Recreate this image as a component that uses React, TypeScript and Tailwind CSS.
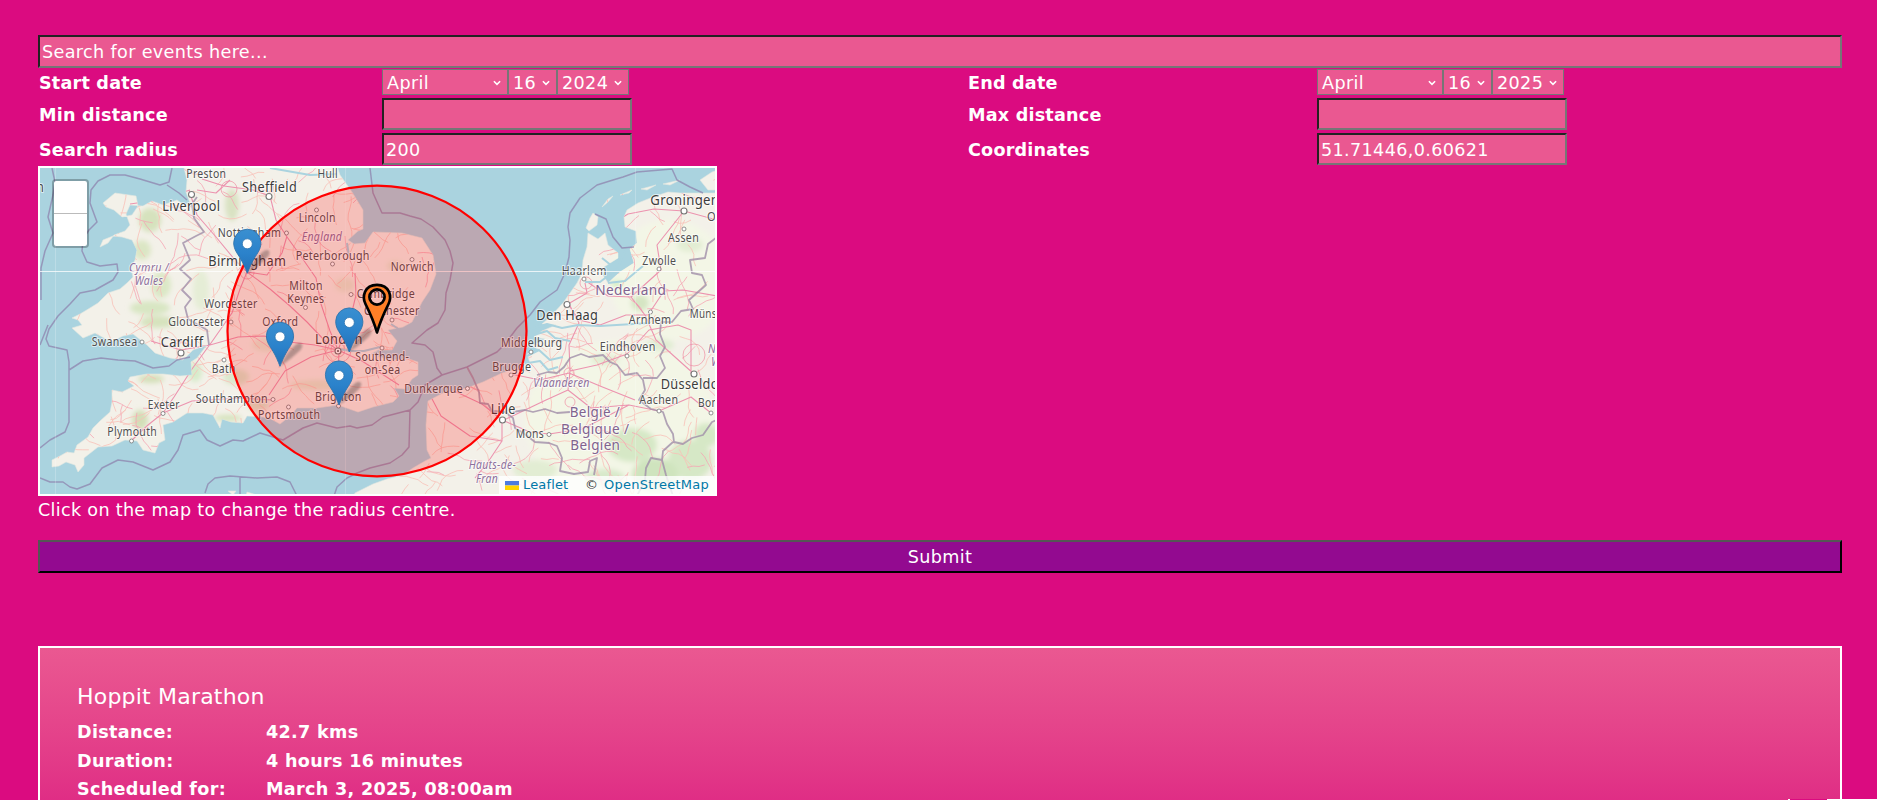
import React from "react";

type Label = [text: string, x: number, y: number, width: number, kind?: "city" | "region" | "country"];

const LABELS: Label[] = [
  ["Preston", 186.3, 177.5, 40], ["Sheffield", 242, 191.5, 55, "city"], ["Hull", 317.5, 178, 20.5],
  ["Liverpool", 162.3, 210.5, 58, "city"], ["Lincoln", 298.7, 222, 37], ["Nottingham", 217.7, 237, 63.5],
  ["England", 301.7, 240.5, 40.5, "region"], ["Peterborough", 295.7, 260, 74], ["Birmingham", 208.3, 266, 78, "city"],
  ["Cymru /", 129, 271.5, 40, "region"], ["Wales", 134.7, 284.5, 28.5, "region"], ["Milton", 289.3, 289.5, 33.5],
  ["Keynes", 287.3, 302.5, 37], ["Worcester", 204.3, 307.5, 53.5], ["Gloucester", 168.3, 326, 56.5],
  ["Oxford", 262.3, 326, 36], ["Cambridge", 356.7, 298.3, 58.3], ["Colchester", 364, 315, 55.7],
  ["London", 315, 344, 47.7, "city"], ["Southend-", 355.3, 360.5, 54], ["on-Sea", 364.7, 373.5, 35.7],
  ["Brighton", 315, 401, 46.7], ["Norwich", 390.7, 271.3, 43], ["Groningen", 650.3, 205.3, 69, "city"],
  ["O", 707, 221, 9], ["Assen", 668, 241.5, 31], ["Zwolle", 642.3, 264.7, 34], ["Haarlem", 561.7, 274.7, 45],
  ["Nederland", 595.3, 295, 71, "country"], ["Den Haag", 536.3, 320, 62, "city"], ["Arnhem", 628.7, 323.7, 42.7],
  ["Müns", 689.7, 318, 27], ["Swansea", 91.7, 345.7, 45.7], ["Cardiff", 160.7, 347, 42.7, "city"], ["Bath", 211.7, 373, 24],
  ["Exeter", 147.7, 408.7, 32], ["Southampton", 195.7, 403, 72.3], ["Plymouth", 107.3, 436.3, 49.7],
  ["Portsmouth", 258, 419.3, 62.3], ["Middelburg", 501, 347, 61.3], ["Brugge", 492.3, 370.7, 39],
  ["Eindhoven", 599.7, 351.3, 56], ["Dunkerque", 404.3, 392.7, 58.7], ["Vlaanderen", 533.3, 387.3, 56.3, "region"],
  ["Lille", 490.7, 414, 25, "city"], ["België /", 569.7, 417.3, 50.3, "country"], ["Belgique /", 561, 434.3, 68.3, "country"],
  ["Belgien", 570.3, 450.3, 50, "country"], ["Düsseldo", 660.7, 389, 58, "city"], ["Aachen", 639.3, 404.3, 39],
  ["Bon", 698, 407.3, 20], ["Mons", 515.7, 438.3, 28.3], ["Hauts-de-", 468.7, 469.3, 47.3, "region"],
  ["Fran", 476, 482.7, 22, "region"], ["N", 708, 353, 8, "region"], ["W", 711, 366, 10, "region"], ["n", 37, 192, 7, "city"],
];

const TOWNS: [number, number, number][] = [
  [191.5, 194.5, 3], [269, 196.5, 3], [316.5, 210, 2], [286.5, 233, 2], [332.5, 264, 2], [412, 259.5, 2], [351, 294.5, 2],
  [305.5, 307.5, 2], [392, 320, 2], [338, 351, 3], [382, 348, 2], [338.5, 406, 2], [288.5, 407, 2], [273, 399.5, 2],
  [224, 360, 2], [181, 353, 3], [142, 342, 2], [163, 413.5, 2], [131.5, 441, 2], [684, 211, 3], [684, 229, 2],
  [659, 269, 2], [584, 279, 2], [567, 304.5, 3], [650.5, 312, 2], [531, 352, 2], [627, 356, 2], [694, 374, 3],
  [711, 413, 2], [659, 411, 2], [467.5, 388.5, 2], [502.5, 420, 3], [549, 434.5, 2], [231, 322, 2], [511, 375, 2],
];

const BRITAIN =
  "M182 160 187 180 186 192 190 203 184 205 177 200 163 205 152 201 143 206 130 205 126 214 130 225 125 231 114 235 108 243 100 247 103 240 113 236 122 237 132 240 137 250 135 260 131 268 133 277 127 283 120 289 108 293 98 303 90 308 80 314 72 318 78 320 82 325 72 328 83 338 95 333 104 338 113 341 123 336 133 334 147 345 155 353 170 358 183 360 193 350 207 345 197 358 191 362 192 375 180 376 163 374 147 374 130 377 128 381 134 386 122 392 112 390 112 402 110 412 100 421 93 428 88 437 77 445 74 453 67 452 60 456 52 460 52 467 59 466 66 462 75 465 78 472 84 465 84 458 98 447 112 446 125 440 137 441 143 450 155 453 159 443 165 440 163 425 173 422 187 413 203 413 213 415 220 428 222 419 231 422 243 423 247 416 263 417 271 419 280 424 290 416 297 408 317 408 338 405 358 412 373 407 393 402 399 396 394 388 405 389 412 379 418 375 418 362 409 359 390 360 380 357 371 354 378 350 392 350 397 341 392 335 388 330 403 327 412 322 422 302 430 290 436 274 433 255 422 238 402 233 373 232 365 243 354 244 348 240 358 231 363 229 363 210 352 192 340 175 335 160Z";
const EUROPE =
  "M725 193 703 193 680 193 668 192 653 197 638 203 627 210 624 217 625 227 636 231 637 243 630 249 634 263 620 272 608 283 603 275 604 267 618 258 618 253 608 245 605 233 598 239 588 233 587 247 583 260 582 273 577 283 563 303 550 317 542 324 556 325 542 331 534 337 545 339 532 346 540 350 527 354 530 363 513 370 502 373 483 382 467 388 443 393 428 401 426 425 427 450 431 458 425 461 413 468 403 475 387 479 373 484 355 493 350 505 725 505Z";
const ISLANDS =
  "M103 203 115 193 136 196 138 206 132 215 122 217 114 210 106 207Z M593 213 598 217 597 225 589 231 586 228 590 218Z M602 207 608 199 613 196 608 202Z M620 195 632 190 629 193Z M641 189 656 185 647 190Z M663 184 680 180 670 185Z M700 180 712 172 718 170 718 190 708 190Z M228 491 236 491 233 495Z M247 492 260 496 246 496Z";
const LAND = `${BRITAIN}${EUROPE}${ISLANDS}`;

const BORDERS =
  "M52 168 55 182 53 195 48 217 53 233 45 251 41 268 41 300 M40 345 48 325 M172 168 169 182 160 185 140 179 125 175 110 175 98 181 91 190 90 203 97 222 89 230 83 239 82 251 87 262 100 266 117 264 118 272 113 280 95 290 80 293 70 304 58 316 49 329 46 339 49 346 67 350 69 362 69 422 65 432 50 440 40 448 M167 185 179 193 187 200 M69 370 83 361 101 358 118 360 135 361 153 368 169 366 177 360 190 357 M40 478 50 482 63 482 70 487 77 489 90 484 102 468 118 460 133 462 153 470 170 462 178 450 183 435 200 430 207 440 220 446 233 440 243 441 260 433 283 440 303 428 317 423 337 428 350 426 357 428 372 425 383 417 410 410 418 402 425 385 442 375 M410 410 409 447 402 455 390 463 370 468 357 473 347 478 337 487 334 496 M205 493 208 484 215 478 230 476 257 478 277 477 290 482 297 496 M240 477 240 496 M370 168 373 193 382 213 400 213 410 216 421 219 433 227 445 240 450 251 453 263 450 280 446 293 445 310 438 323 427 330 412 343 425 345 433 352 437 368 442 375 467 367 497 352 505 344 517 328 530 315 540 302 557 290 565 273 569 257 570 240 568 227 570 213 580 198 597 185 613 180 623 177 637 172 672 169 677 180 690 187 703 193 M595 214 606 219 613 237 622 248 634 247";
const NATIONAL =
  "M197 197 192 204 194 218 204 232 196 236 183 243 190 260 180 269 191 279 182 290 191 299 185 307 188 319 207 330 209 345 M467 367 473 378 479 392 480 403 488 404 492 411 505 412 513 418 515 428 526 435 535 442 549 443 557 446 562 458 560 471 574 474 588 472 590 461 597 458 594 475 M537 375 548 372 557 373 564 367 570 358 581 354 589 357 603 355 610 362 617 365 625 375 637 373 643 380 645 390 639 400 651 409 663 412 667 424 673 434 674 442 683 444 692 438 703 435 712 422 717 420 M673 442 663 451 662 460 651 458 646 468 645 480 637 496 M662 460 666 475 673 496 M643 378 657 378 665 368 660 356 665 347 660 334 661 322 672 322 681 311 693 309 689 300 706 285 702 275 692 273 690 260 705 258 708 244 717 237 M513 412 525 410 533 412 545 409 557 413 570 412";

const MOTORWAYS =
  "M189 190 197 215 216 237 235 260 247 272 270 289 290 306 307 322 325 341 338 350 M247 272 240 289 232 313 211 343 192 369 174 397 163 413 M270 196 276 220 287 237 300 255 316 278 321 304 330 331 338 350 M338 350 362 361 399 385 M338 350 311 357 285 371 269 395 M338 350 315 345 289 342 264 336 238 337 210 345 181 350 151 341 M339 350 338 377 339 405 M338 350 350 320 356 295 355 273 M202 179 224 186 253 190 270 196 M197 190 216 193 230 180 M247 272 267 275 282 253 287 236 M190 190 158 200 130 204 M585 283 587 293 568 304 579 320 600 325 626 315 648 315 M586 281 608 296 631 297 661 270 657 245 684 211 M568 302 579 323 569 345 570 371 568 390 546 400 504 420 M570 371 597 365 627 354 M568 390 591 408 629 405 659 411 691 397 711 413 M511 374 540 380 569 373 600 386 635 400 M502 420 502 441 488 462 475 478 M502 420 530 432 549 434 582 429 629 405 M430 395 441 416 470 436 502 441 M430 397 450 389 482 404 502 420 M627 354 649 330 678 325 691 330 691 374 M648 315 664 291 683 290 717 296 M631 297 645 315 656 340 694 374 M608 238 615 222 628 214 654 209 684 211 717 220 M131 441 148 425 163 413 192 401 240 398 272 400";
const WATER =
  "M527 337 547 331 555 338 570 341 M527 356 539 350 550 360 563 357 M528 363 540 361 548 370 558 367 M531 329 547 324 562 328 578 325 600 326 650 323 M602 258 612 266 M625 251 618 268 600 282 585 282 M608 283 625 281 643 266 M380 347 364 351 351 351 339 349 M391 324 400 330 M347 243 349 256 M270 168 310 175 337 174";

function createRandom(seed: number) {
  let s = seed;
  return () => {
    s = (s * 1664525 + 1013904223) % 4294967296;
    return s / 4294967296;
  };
}

function buildRoads(count: number, seed: number) {
  const rnd = createRandom(seed);
  let d = "";
  for (let i = 0; i < count; i++) {
    let x = 45 + rnd() * 670;
    let y = 168 + rnd() * 325;
    let a = rnd() * Math.PI * 2;
    d += `M${x.toFixed(1)} ${y.toFixed(1)}`;
    const steps = 3 + Math.floor(rnd() * 5);
    for (let j = 0; j < steps; j++) {
      a += (rnd() - 0.5) * 0.9;
      x += Math.cos(a) * 6;
      y += Math.sin(a) * 6;
      d += `L${x.toFixed(1)} ${y.toFixed(1)}`;
    }
  }
  return d;
}

const MINOR_ROADS = buildRoads(460, 17);
const MAJOR_ROADS = buildRoads(170, 91);

const GREENS: [number, number, number, number, string][] = [
  [150, 220, 11, 12, "#d6e2bd"], [142, 250, 9, 10, "#dbe6c4"], [161, 285, 10, 13, "#dbe8c6"], [150, 308, 20, 7, "#d8e6c3"],
  [158, 322, 18, 6, "#d6e3bd"], [140, 420, 8, 10, "#d3dfb8"], [151, 379, 13, 4, "#d3dfb8"], [232, 205, 7, 16, "#d9e2c2"],
  [195, 372, 7, 10, "#d6ebca"], [236, 377, 13, 8, "#dbe8cc"], [258, 405, 11, 6, "#dbe8cc"], [228, 418, 14, 3, "#d3e2b9"],
  [632, 445, 25, 17, "#d6e8c6"], [655, 475, 23, 17, "#cfe4be"], [605, 478, 20, 9, "#d8e9ca"], [690, 460, 22, 20, "#d6e8c6"],
  [640, 303, 9, 8, "#d5e5c3"], [660, 345, 14, 6, "#e0edd2"], [605, 360, 14, 5, "#e0edd2"], [617, 284, 6, 4, "#d8f0c8"],
  [706, 435, 12, 12, "#d6e8c6"], [535, 470, 22, 10, "#e2edd3"], [690, 245, 13, 7, "#e2edd3"], [395, 266, 8, 5, "#e2e9d0"],
  [345, 285, 10, 7, "#e5ebd4"], [270, 345, 18, 7, "#e4ebd4"], [318, 385, 28, 5, "#e2ead0"], [201, 290, 8, 20, "#e5edd6"],
  [620, 420, 95, 80, "#f3f6e6"], [670, 280, 60, 60, "#f3f6e6"],
];

function BluePin({ x, y }: { x: number; y: number }) {
  return (
    <g transform={`translate(${x} ${y})`}>
      <path d="M0 0C4-9 9-16 15-21C22-27 25-20 19-15C13-9 6-4 0 0Z" fill="#222" opacity="0.3" filter="url(#soft)" />
      <path
        d="M0 0C-2-5-4-10-7-15C-10-20-13.6-24-13.6-30.5A13.6 13.6 0 0 1 13.6-30.5C13.6-24 10-20 7-15C4-10 2-5 0 0Z"
        fill="url(#pin)" stroke="#2f74ad" strokeWidth="0.9"
      />
      <circle cy="-29.5" r="5" fill="#fff" stroke="#2e75b0" strokeWidth="0.8" />
    </g>
  );
}

function EventMap() {
  return (
    <div className="relative h-[330px] w-[679px] overflow-hidden border-2 border-white bg-[#aad3df]">
      <svg className="block h-full w-full" viewBox="40 168 675 326">
        <defs>
          <clipPath id="land"><path d={LAND} /></clipPath>
          <linearGradient id="pin" x1="0" y1="0" x2="0" y2="1">
            <stop offset="0" stopColor="#3a8fd0" /><stop offset="0.55" stopColor="#2b82cb" /><stop offset="1" stopColor="#2370b5" />
          </linearGradient>
          <filter id="soft"><feGaussianBlur stdDeviation="1.3" /></filter>
          <filter id="blot" x="-50%" y="-50%" width="200%" height="200%"><feGaussianBlur stdDeviation="2.4" /></filter>
        </defs>
        <path d={LAND} fill="#f3f1e9" stroke="#e3e8e0" strokeWidth="0.6" strokeLinejoin="round" />
        <g clipPath="url(#land)" fill="none">
          <g filter="url(#blot)">
            {[...GREENS].reverse().map(([x, y, rx, ry, c], i) => <ellipse key={i} cx={x} cy={y} rx={rx} ry={ry} fill={c} />)}
          </g>
          <path d={MINOR_ROADS} stroke="#f9c0b8" strokeWidth="0.8" />
          <path d={MAJOR_ROADS} stroke="#f5a6b4" strokeWidth="0.8" />
          <g stroke="#f09bab" strokeWidth="0.8">
            <circle cx="338" cy="350" r="13" /><circle cx="338" cy="350" r="7" />
            <circle cx="247" cy="272" r="7" /><circle cx="229" cy="189" r="8" /><circle cx="586" cy="283" r="6" />
            <circle cx="570" cy="402" r="5" /><circle cx="569" cy="373" r="5" /><circle cx="694" cy="355" r="11" />
          </g>
          <path d={MOTORWAYS} stroke="#ec93af" strokeWidth="1.1" strokeLinejoin="round" />
        </g>
        <path d={WATER} fill="none" stroke="#aad3df" strokeWidth="2" strokeLinejoin="round" />
        <path d={BORDERS} fill="none" stroke="#8d83ae" strokeOpacity="0.75" strokeWidth="1.5" strokeLinejoin="round" />
        <path d={NATIONAL} fill="none" stroke="#a08fa9" strokeOpacity="0.8" strokeWidth="1.8" strokeLinejoin="round" />
        {TOWNS.map(([x, y, r], i) => (
          <circle key={i} cx={x} cy={y} r={r} fill="#fff" stroke="#777" strokeWidth={r > 2 ? 1.1 : 0.8} />
        ))}
        <circle cx="338" cy="351" r="1" fill="#555" />
        <g fontFamily="'Noto Sans', sans-serif" stroke="#fff" strokeOpacity="0.6" strokeWidth="2.2" strokeLinejoin="round" paintOrder="stroke">
          {LABELS.map(([t, x, y, w, kind]) => (
            <text
              key={t} x={x} y={y} textLength={w} lengthAdjust="spacingAndGlyphs"
              fontSize={kind === "city" ? 13.8 : kind === "country" ? 14 : 12}
              fontStyle={kind === "region" ? "italic" : "normal"}
              fill={kind === "region" ? "#8d6f9c" : kind === "country" ? "#80638f" : kind === "city" ? "#3c3c3c" : "#505050"}
            >
              {t}
            </text>
          ))}
        </g>
        <path d="M40 271.5H716" stroke="#fff" strokeOpacity="0.75" strokeWidth="1" />
        <path d="M55.5 168V494M345.5 168V494M635.5 168V494" stroke="#fff" strokeOpacity="0.22" strokeWidth="1" />
        <ellipse cx="377" cy="331" rx="149.5" ry="145.3" fill="#f00" fillOpacity="0.2" stroke="#f00" strokeWidth="2.2" />
        <BluePin x={247.3} y={273.3} />
        <BluePin x={349.3} y={352} />
        <BluePin x={280} y={366.3} />
        <BluePin x={339} y={405} />
        <path
          d="M377 332.5C374 322 369 311 365.5 304C362 297 364 284.8 377 284.8C390 284.8 392 297 388.5 304C385 311 380 322 377 332.5Z M384.6 297A7.6 7.6 0 1 0 369.4 297A7.6 7.6 0 1 0 384.6 297Z"
          fill="#ff7f27" fillRule="evenodd" stroke="#000" strokeWidth="2.7" strokeLinejoin="round"
        />
      </svg>
      <div className="absolute left-[12px] top-[11px] flex h-[69px] w-[37px] flex-col rounded-[4px] border-2 border-black/25 bg-white bg-clip-padding">
        <div className="h-[33px] border-b border-[#bbb]" />
      </div>
      <div className="absolute bottom-0 right-0 flex h-[18px] w-[216px] items-center bg-white/80 text-[13px] leading-[18px] tracking-[0.15px] text-[#0078a8]">
        <svg className="ml-[6px] h-[9px] w-[14px]" viewBox="0 0 14 9"><path fill="#4c7be1" d="M0 0h14v4.5H0z" /><path fill="#ffd500" d="M0 4.5h14V9H0z" /></svg>
        <span className="ml-[4px]">Leaflet</span>
        <span className="ml-auto mr-[6px] text-[#333]">©</span>
        <span className="mr-[6px] tracking-[0.25px]">OpenStreetMap</span>
      </div>
    </div>
  );
}

function Chevron() {
  return (
    <svg className="mr-[6px] h-[6px] w-[8px] shrink-0" viewBox="0 0 9 6" fill="none">
      <path d="M1 1l3.5 3.5L8 1" stroke="#fff" strokeWidth="1.8" />
    </svg>
  );
}

function DateSelect({ year }: { year: string }) {
  const box = "flex h-[26px] items-center justify-between border border-[#767676] bg-[#ea5891] pl-[4px] pt-px";
  return (
    <div className="flex">
      <div className={`${box} w-[126px]`}><span>April</span><Chevron /></div>
      <div className={`${box} w-[49px]`}><span>16</span><Chevron /></div>
      <div className={`${box} w-[72px]`}><span>{year}</span><Chevron /></div>
    </div>
  );
}

function Field({ value = "" }: { value?: string }) {
  return (
    <input
      readOnly value={value}
      className="block h-[32px] w-[250px] border-2 border-b-[#767676] border-l-[#222] border-r-[#767676] border-t-[#222] bg-[#ea5891] px-[2px] pt-px outline-none"
    />
  );
}

type RowProps = { left: string; right: string; a: React.ReactNode; b: React.ReactNode; className: string; labelClass: string };

function Row({ left, right, a, b, className, labelClass }: RowProps) {
  return (
    <div className={`grid grid-cols-[344px_585px_350px_1fr] items-start ${className}`}>
      <div className={`pl-px font-bold tracking-[0.2px] ${labelClass}`}>{left}</div>
      <div>{a}</div>
      <div className={`pl-px font-bold tracking-[0.2px] ${labelClass}`}>{right}</div>
      <div>{b}</div>
    </div>
  );
}

const DETAILS = [
  ["Distance:", "42.7 kms"],
  ["Duration:", "4 hours 16 minutes"],
  ["Scheduled for:", "March 3, 2025, 08:00am"],
];

export default function App() {
  return (
    <main className="relative h-[800px] w-full overflow-hidden border-r-[3px] border-white bg-[#db0b80] pl-[38px] pr-[35px] pt-[35px] font-['DejaVu_Sans','Liberation_Sans',sans-serif] text-[17.6px] leading-[24px] tracking-[0.35px] text-white">
      <input
        placeholder="Search for events here..."
        className="block h-[33px] w-full border-2 border-b-[#767676] border-l-[#222] border-r-[#767676] border-t-[#222] bg-[#ea5891] px-[2px] pt-px outline-none placeholder:text-white placeholder:opacity-100"
      />
      <Row className="h-[30px] pt-px" labelClass="pt-[2px]" left="Start date" right="End date" a={<DateSelect year="2024" />} b={<DateSelect year="2025" />} />
      <Row className="h-[35px]" labelClass="pt-[5px]" left="Min distance" right="Max distance" a={<Field />} b={<Field />} />
      <Row className="h-[33px]" labelClass="pt-[5px]" left="Search radius" right="Coordinates" a={<Field value="200" />} b={<Field value="51.71446,0.60621" />} />
      <EventMap />
      <p className="h-[44px] pt-[2px] tracking-[0.3px]">Click on the map to change the radius centre.</p>
      <button className="block h-[33px] w-full border-2 border-b-black border-l-[#555] border-r-black border-t-[#555] bg-[#930a90]">
        Submit
      </button>
      <section className="mt-[73px] h-[218px] border-2 border-white bg-linear-to-b from-[#ea5891] to-[#db0b80] px-[37px] pt-[34px]">
        <h2 className="h-[38px] text-[22px] leading-[29px] tracking-[0.2px]">Hoppit Marathon</h2>
        <dl className="font-bold tracking-[0.3px]">
          {DETAILS.map(([term, value]) => (
            <div key={term} className="grid h-[28.7px] grid-cols-[189px_1fr]">
              <dt>{term}</dt>
              <dd>{value}</dd>
            </div>
          ))}
        </dl>
      </section>
      <div className="absolute bottom-0 right-0 flex h-px w-[89px] justify-between border-l-2 border-white bg-[#db0b80]">
        <span className="ml-auto h-px w-[50px] bg-white" />
      </div>
    </main>
  );
}
